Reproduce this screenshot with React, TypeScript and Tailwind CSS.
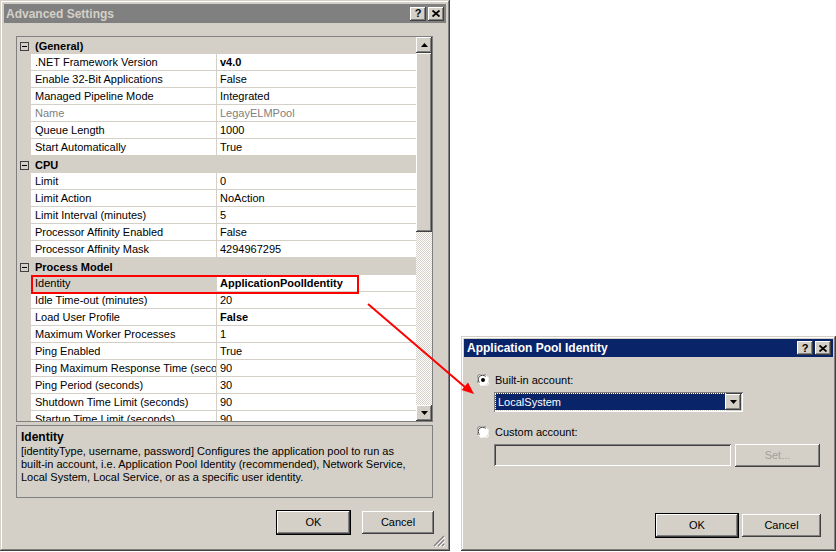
import React from "react";

type Row =
  | { cat: string }
  | { name: string; value: string; bold?: boolean; dim?: boolean; selected?: boolean };

const rows: Row[] = [
  { cat: "(General)" },
  { name: ".NET Framework Version", value: "v4.0", bold: true },
  { name: "Enable 32-Bit Applications", value: "False" },
  { name: "Managed Pipeline Mode", value: "Integrated" },
  { name: "Name", value: "LegayELMPool", dim: true },
  { name: "Queue Length", value: "1000" },
  { name: "Start Automatically", value: "True" },
  { cat: "CPU" },
  { name: "Limit", value: "0" },
  { name: "Limit Action", value: "NoAction" },
  { name: "Limit Interval (minutes)", value: "5" },
  { name: "Processor Affinity Enabled", value: "False" },
  { name: "Processor Affinity Mask", value: "4294967295" },
  { cat: "Process Model" },
  { name: "Identity", value: "ApplicationPoolIdentity", bold: true, selected: true },
  { name: "Idle Time-out (minutes)", value: "20" },
  { name: "Load User Profile", value: "False", bold: true },
  { name: "Maximum Worker Processes", value: "1" },
  { name: "Ping Enabled", value: "True" },
  { name: "Ping Maximum Response Time (seconds)", value: "90" },
  { name: "Ping Period (seconds)", value: "30" },
  { name: "Shutdown Time Limit (seconds)", value: "90" },
  { name: "Startup Time Limit (seconds)", value: "90" },
];

const raised =
  "bg-[#d4d0c8] shadow-[inset_-1px_-1px_#404040,inset_1px_1px_#ffffff,inset_-2px_-2px_#808080]";
const sunken =
  "shadow-[inset_1px_1px_#808080,inset_-1px_-1px_#ffffff,inset_2px_2px_#404040,inset_-2px_-2px_#d4d0c8]";
const frame =
  "bg-[#d4d0c8] shadow-[inset_-1px_-1px_#404040,inset_1px_1px_#d4d0c8,inset_-2px_-2px_#808080,inset_2px_2px_#ffffff]";

const TitleButtons = () => (
  <div className="flex gap-[2px]">
    <div className={`flex h-[14px] w-[16px] items-center justify-center text-[11px] font-bold leading-none text-black ${raised}`}>
      ?
    </div>
    <div className={`flex h-[14px] w-[16px] items-center justify-center ${raised}`}>
      <svg width="8" height="7" viewBox="0 0 8 7">
        <path d="M0.5 0.5 L7.5 6.5 M7.5 0.5 L0.5 6.5" stroke="#000" strokeWidth="1.8" />
      </svg>
    </div>
  </div>
);

const Btn = ({ label, w, dim, def }: { label: string; w: string; dim?: boolean; def?: boolean }) => (
  <div
    className={`flex h-[23px] items-center justify-center text-[11px] ${w} ${raised} ${
      dim ? "text-[#a0a0a0]" : "text-black"
    } ${def ? "outline outline-1 outline-[#000]" : ""}`}
  >
    {label}
  </div>
);

const Radio = ({ on }: { on?: boolean }) => (
  <svg width="12" height="12" viewBox="0 0 12 12">
    <circle cx="6" cy="6" r="5.5" fill="#ffffff" />
    <path d="M1.2 9 A5.2 5.2 0 0 1 9 1.2" fill="none" stroke="#808080" strokeWidth="1" />
    <path d="M2.5 8.6 A4 4 0 0 1 8.6 2.5" fill="none" stroke="#404040" strokeWidth="1" />
    <path d="M10.8 3 A5.2 5.2 0 0 1 3 10.8" fill="none" stroke="#ffffff" strokeWidth="1" />
    {on && <circle cx="6" cy="6" r="2" fill="#000" />}
  </svg>
);

const MinusBox = () => (
  <div className="flex h-[9px] w-[9px] items-center justify-center border border-[#404040] bg-[#d4d0c8]">
    <div className="h-px w-[5px] bg-black" />
  </div>
);

export default function App() {
  return (
    <div className="relative flex h-[552px] w-[836px] bg-white font-['Liberation_Sans',Arial,sans-serif] text-[11px] text-black">
      {/* Advanced Settings */}
      <div className={`flex h-[551px] w-[450px] flex-col p-[4px] ${frame}`}>
        <div className="flex h-[19px] items-center justify-between bg-[#808080] pl-[2px] pr-[2px]">
          <span className="text-[12px] font-bold text-[#d4d0c8]">Advanced Settings</span>
          <TitleButtons />
        </div>

        <div className="ml-[12px] mt-[13px] flex h-[386px] w-[417px] border border-[#808080] bg-[#d4d0c8]">
          <div className="relative h-full w-[400px] overflow-hidden">
            {rows.map((r, i) =>
              "cat" in r ? (
                <div key={i} className="flex h-[17px] items-center bg-[#d4d0c8] pt-[1px]">
                  <div className="flex w-[14px] justify-center pl-[1px]">
                    <MinusBox />
                  </div>
                  <span className="pl-[4px] font-bold">{r.cat}</span>
                </div>
              ) : (
                <div key={i} className="flex h-[17px]">
                  <div className="w-[14px] shrink-0 bg-[#d4d0c8]" />
                  <div
                    className={`h-[17px] w-[186px] shrink-0 overflow-hidden whitespace-nowrap border-b border-r border-[#d4d0c8] pl-[4px] pr-[1px] leading-[17px] ${
                      r.selected ? "bg-[#d4d0c8]" : "bg-white"
                    } ${r.dim ? "text-[#808080]" : ""}`}
                  >
                    {r.name}
                  </div>
                  <div
                    className={`h-[17px] flex-1 overflow-hidden whitespace-nowrap border-b border-[#d4d0c8] bg-white pl-[3px] leading-[17px] ${
                      r.bold ? "font-bold" : ""
                    } ${r.dim ? "text-[#808080]" : ""}`}
                  >
                    {r.value}
                  </div>
                </div>
              )
            )}
            <div className="absolute left-[14px] top-[238px] h-[19px] w-[328px] border-2 border-[#ff0000]" />
          </div>
          {/* scrollbar */}
          <div className="flex w-[16px] flex-col">
            <div className={`flex h-[16px] items-center justify-center ${raised}`}>
              <svg width="7" height="4" viewBox="0 0 7 4">
                <path d="M3.5 0 L7 4 L0 4 Z" fill="#000" />
              </svg>
            </div>
            <div className={`h-[179px] ${raised}`} />
            <div className="flex-1 bg-[conic-gradient(#ffffff_25%,#d4d0c8_0_50%,#ffffff_0_75%,#d4d0c8_0)] bg-[length:2px_2px]" />
            <div className={`flex h-[16px] items-center justify-center ${raised}`}>
              <svg width="7" height="4" viewBox="0 0 7 4">
                <path d="M0 0 L7 0 L3.5 4 Z" fill="#000" />
              </svg>
            </div>
          </div>
        </div>

        <div className="ml-[12px] mt-[3px] h-[73px] w-[417px] border border-[#808080] px-[4px] pt-[3px] leading-[13px]">
          <div className="text-[12px] font-bold leading-[16px]">Identity</div>
          <div>[identityType, username, password] Configures the application pool to run as</div>
          <div>built-in account, i.e. Application Pool Identity (recommended), Network Service,</div>
          <div>Local System, Local Service, or as a specific user identity.</div>
        </div>

        <div className="mt-[13px] flex justify-end gap-[12px] pr-[12px]">
          <Btn label="OK" w="w-[73px]" def />
          <Btn label="Cancel" w="w-[72px]" />
        </div>
        <div className="mt-auto flex justify-end pr-[1px]">
          <svg width="12" height="12" viewBox="0 0 12 12">
            <path d="M11 1 L1 11 M11 5 L5 11 M11 9 L9 11" stroke="#808080" strokeWidth="1.2" />
            <path d="M12 2 L2 12 M12 6 L6 12 M12 10 L10 12" stroke="#ffffff" strokeWidth="1" />
          </svg>
        </div>
      </div>

      {/* Application Pool Identity */}
      <div className={`ml-[11px] mt-[336px] flex h-[215px] w-[375px] flex-col p-[3px] ${frame}`}>
        <div className="flex h-[18px] items-center justify-between bg-[#0a246a] pl-[3px] pr-[2px]">
          <span className="text-[12px] font-bold text-white">Application Pool Identity</span>
          <TitleButtons />
        </div>
        <div className="flex flex-col pl-[13px] pr-[12px]">
          <div className="mt-[17px] flex h-[12px] items-center gap-[6px]">
            <Radio on />
            <span>Built-in account:</span>
          </div>
          <div className={`ml-[17px] mt-[6px] flex h-[20px] w-[249px] bg-white p-[2px] ${sunken}`}>
            <div className="flex flex-1 items-center bg-[#0a246a] pl-[2px] text-white outline outline-1 outline-dotted outline-[#ffffff]">
              LocalSystem
            </div>
            <div className={`flex w-[16px] items-center justify-center ${raised}`}>
              <svg width="7" height="4" viewBox="0 0 7 4">
                <path d="M0 0 L7 0 L3.5 4 Z" fill="#000" />
              </svg>
            </div>
          </div>
          <div className="mt-[14px] flex h-[12px] items-center gap-[6px]">
            <Radio />
            <span>Custom account:</span>
          </div>
          <div className="ml-[17px] mt-[6px] flex gap-[4px]">
            <div className={`h-[22px] w-[237px] bg-[#d4d0c8] ${sunken}`} />
            <Btn label="Set..." w="w-[85px]" dim />
          </div>
          <div className="mt-[47px] flex justify-end gap-[4px]">
            <Btn label="OK" w="w-[82px]" def />
            <Btn label="Cancel" w="w-[79px]" />
          </div>
        </div>
      </div>

      {/* annotation arrow */}
      <svg className="pointer-events-none absolute inset-0" width="836" height="552" viewBox="0 0 836 552">
        <line x1="368" y1="304" x2="466" y2="388" stroke="#ff0000" strokeWidth="2" />
        <polygon points="474,394 461.6,390 468,382.4" fill="#ff0000" />
      </svg>
    </div>
  );
}
